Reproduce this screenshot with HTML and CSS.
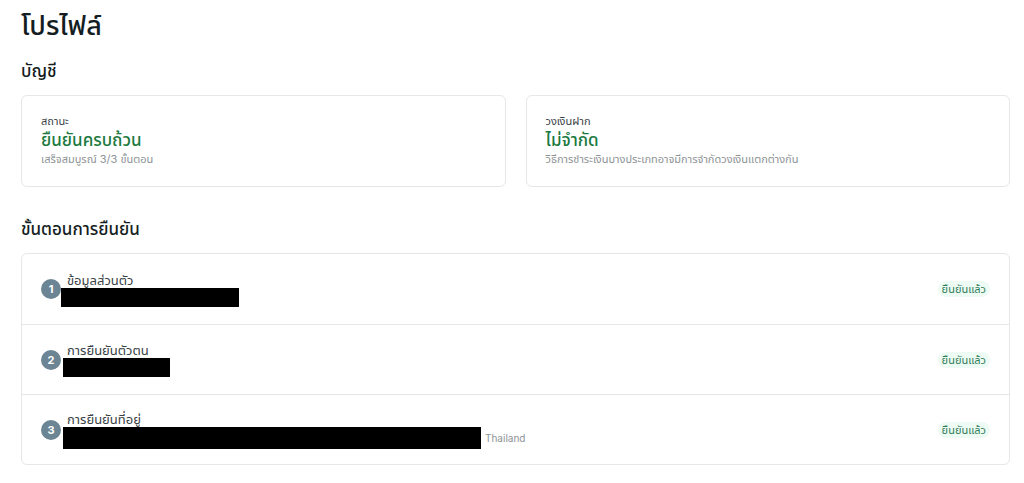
FILE: index.html
```html
<!DOCTYPE html>
<html lang="th">
<head>
    <meta charset="UTF-8">
    <meta name="viewport" content="width=device-width, initial-scale=1.0">
    <title>โปรไฟล์</title>
    <link rel="stylesheet" href="styles.css">
</head>
<body>
    <main class="profile">
        <h1>โปรไฟล์</h1>

        <h2>บัญชี</h2>
        <section class="cards">
            <div class="card">
                <div class="card-label">สถานะ</div>
                <div class="card-value">ยืนยันครบถ้วน</div>
                <div class="card-note">เสร็จสมบูรณ์ 3/3 ขั้นตอน</div>
            </div>
            <div class="card">
                <div class="card-label">วงเงินฝาก</div>
                <div class="card-value">ไม่จำกัด</div>
                <div class="card-note">วิธีการชำระเงินบางประเภทอาจมีการจำกัดวงเงินแตกต่างกัน</div>
            </div>
        </section>

        <h2>ขั้นตอนการยืนยัน</h2>
        <ol class="steps">
            <li class="step">
                <span class="number">1</span>
                <div class="info">
                    <div class="step-title">ข้อมูลส่วนตัว</div>
                    <div class="detail detail-name"><span class="mask mask-name"></span></div>
                </div>
                <span class="badge">ยืนยันแล้ว</span>
            </li>
            <li class="step">
                <span class="number">2</span>
                <div class="info">
                    <div class="step-title">การยืนยันตัวตน</div>
                    <div class="detail"><span class="mask mask-id"></span></div>
                </div>
                <span class="badge">ยืนยันแล้ว</span>
            </li>
            <li class="step">
                <span class="number">3</span>
                <div class="info">
                    <div class="step-title">การยืนยันที่อยู่</div>
                    <div class="detail"><span class="mask mask-address"></span>Thailand</div>
                </div>
                <span class="badge">ยืนยันแล้ว</span>
            </li>
        </ol>
    </main>
</body>
</html>
```

FILE: styles.css
```css
* {
    box-sizing: border-box;
}

body {
    margin: 0;
    background-color: #fff;
    color: #141d22;
    font-family: Inter, "Noto Sans", "Noto Sans Thai", sans-serif;
    font-size: 11px;
    line-height: 16px;
}

.profile {
    padding: 8px 14px 18px 21px;
}

h1 {
    margin: 0 0 15px;
    font-size: 27px;
    font-weight: 500;
    line-height: 36px;
}

h2 {
    margin: 0 0 12px;
    font-size: 17px;
    font-weight: 500;
    line-height: 24px;
}

.cards {
    display: grid;
    grid-template-columns: 1fr 1fr;
    gap: 20px;
    margin-bottom: 30px;
}

.card {
    padding: 17px 19px 19px;
    border: 1px solid #e5e7e8;
    border-radius: 6px;
}

.card-label {
    color: #3a4246;
}

.card-value {
    color: #1b7a40;
    font-size: 17px;
    font-weight: 500;
    line-height: 22px;
}

.card-note {
    color: #8d9396;
}

.steps {
    margin: 0;
    padding: 0;
    border: 1px solid #e5e7e8;
    border-radius: 6px;
    list-style: none;
}

.step {
    display: flex;
    align-items: center;
    min-height: 70px;
    padding: 0 19px;
}

.step + .step {
    border-top: 1px solid #e5e7e8;
}

.number {
    width: 20px;
    height: 20px;
    border-radius: 50%;
    background-color: #6c8594;
    color: #fff;
    font-size: 11px;
    font-weight: 700;
    line-height: 20px;
    text-align: center;
}

.info {
    flex: 1;
}

.step-title {
    padding-left: 6px;
    color: #3a4246;
    font-size: 13px;
}

.detail {
    display: flex;
    align-items: center;
    gap: 4px;
    padding-left: 2px;
    color: #8d9396;
    font-size: 10px;
}

.detail-name {
    padding-left: 0;
}

.mask {
    height: 19px;
    background-color: #000;
}

.mask-name {
    width: 178px;
}

.mask-id {
    width: 107px;
}

.mask-address {
    width: 418px;
    height: 22px;
}

.badge {
    padding: 0 4px;
    border-radius: 8px;
    background-color: #eefaf4;
    color: #2f7d58;
}
```
